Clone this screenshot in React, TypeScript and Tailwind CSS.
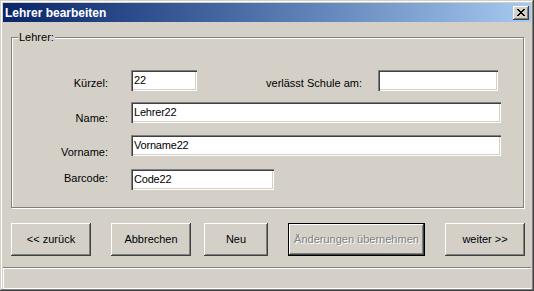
import React from "react";

const raised =
  "bg-[#d4d0c8] shadow-[inset_-1px_-1px_0_#404040,inset_1px_1px_0_#ffffff,inset_-2px_-2px_0_#808080]";
const sunken =
  "bg-white shadow-[inset_1px_1px_0_#808080,inset_2px_2px_0_#404040,inset_-1px_-1px_0_#ffffff,inset_-2px_-2px_0_#d4d0c8]";

function Field({ value, className }: { value?: string; className: string }) {
  return (
    <div className={`${sunken} ${className} h-[21px] pl-[3px] pt-[3px] text-[11px] leading-[14px] tracking-[-0.2px] text-black`}>
      {value}
    </div>
  );
}

function Button({ label, className, disabled }: { label: string; className: string; disabled?: boolean }) {
  if (disabled) {
    return (
      <div className={`${className} h-[33px] border border-black`}>
        <div className={`${raised} flex h-full items-center justify-center text-[11px] text-[#808080] [text-shadow:1px_1px_0_#ffffff]`}>
          {label}
        </div>
      </div>
    );
  }
  return (
    <div className={`${raised} ${className} flex h-[33px] items-center justify-center text-[11px] text-black`}>
      {label}
    </div>
  );
}

export default function App() {
  return (
    <div
      className="flex h-[291px] w-[534px] flex-col bg-[#d4d0c8] p-[3px] shadow-[inset_-1px_-1px_0_#404040,inset_1px_1px_0_#d4d0c8,inset_-2px_-2px_0_#808080,inset_2px_2px_0_#ffffff]"
      style={{ fontFamily: '"Liberation Sans", Arial, sans-serif' }}
    >
      {/* title bar */}
      <div className="flex h-[19px] items-center justify-between bg-gradient-to-r from-[#0a246a] to-[#a6caf0] pl-[2px] pr-[2px]">
        <span className="text-[12px] font-bold text-white">Lehrer bearbeiten</span>
        <div className={`${raised} flex h-[14px] w-[16px] items-center justify-center`}>
          <svg width="8" height="7" viewBox="0 0 8 7" shapeRendering="crispEdges">
            <path d="M0 0h2v1h-2zM6 0h2v1h-2zM1 1h2v1h-2zM5 1h2v1h-2zM2 2h4v1h-4zM3 3h2v1h-2zM2 4h4v1h-4zM1 5h2v1h-2zM5 5h2v1h-2zM0 6h2v1h-2zM6 6h2v1h-2z" fill="#000" />
          </svg>
        </div>
      </div>

      {/* group box */}
      <div className="relative ml-[8px] mt-[15px] h-[171px] w-[513px] border border-[#808080] shadow-[1px_1px_0_#ffffff,inset_1px_1px_0_#ffffff]">
        <span className="absolute left-[6px] top-[-7px] bg-[#d4d0c8] px-[1px] text-[11px] leading-[12px] text-black">Lehrer:</span>
        <div className="flex flex-col gap-[11px] pt-[32px] text-[11px] leading-[12px] text-black">
          <div className="flex items-start">
            <span className="w-[96px] pt-[7px] text-right">Kürzel:</span>
            <Field value="22" className="ml-[23px] w-[66px]" />
            <span className="w-[165px] pt-[7px] text-right">verlässt Schule am:</span>
            <Field className="ml-[16px] w-[120px]" />
          </div>
          <div className="flex items-start">
            <span className="w-[96px] pt-[10px] text-right">Name:</span>
            <Field value="Lehrer22" className="ml-[23px] w-[370px]" />
          </div>
          <div className="flex items-start">
            <span className="w-[96px] pt-[11px] text-right">Vorname:</span>
            <Field value="Vorname22" className="ml-[23px] w-[370px]" />
          </div>
          <div className="flex items-start">
            <span className="w-[96px] pt-[3px] text-right">Barcode:</span>
            <Field value="Code22" className="ml-[23px] w-[143px]" />
          </div>
        </div>
      </div>

      {/* buttons */}
      <div className="ml-[8px] mt-[15px] flex">
        <Button label="<< zurück" className="w-[80px]" />
        <Button label="Abbrechen" className="ml-[20px] w-[80px]" />
        <Button label="Neu" className="ml-[13px] w-[64px]" />
        <Button label="Änderungen übernehmen" className="ml-[20px] w-[137px]" disabled />
        <Button label="weiter >>" className="ml-[20px] w-[80px]" />
      </div>

      {/* status bar */}
      <div className="mt-[11px] h-[21px] border-t border-[#808080] shadow-[inset_0_1px_0_#ffffff,inset_1px_0_0_#ffffff,0_1px_0_#ffffff]" />
    </div>
  );
}
